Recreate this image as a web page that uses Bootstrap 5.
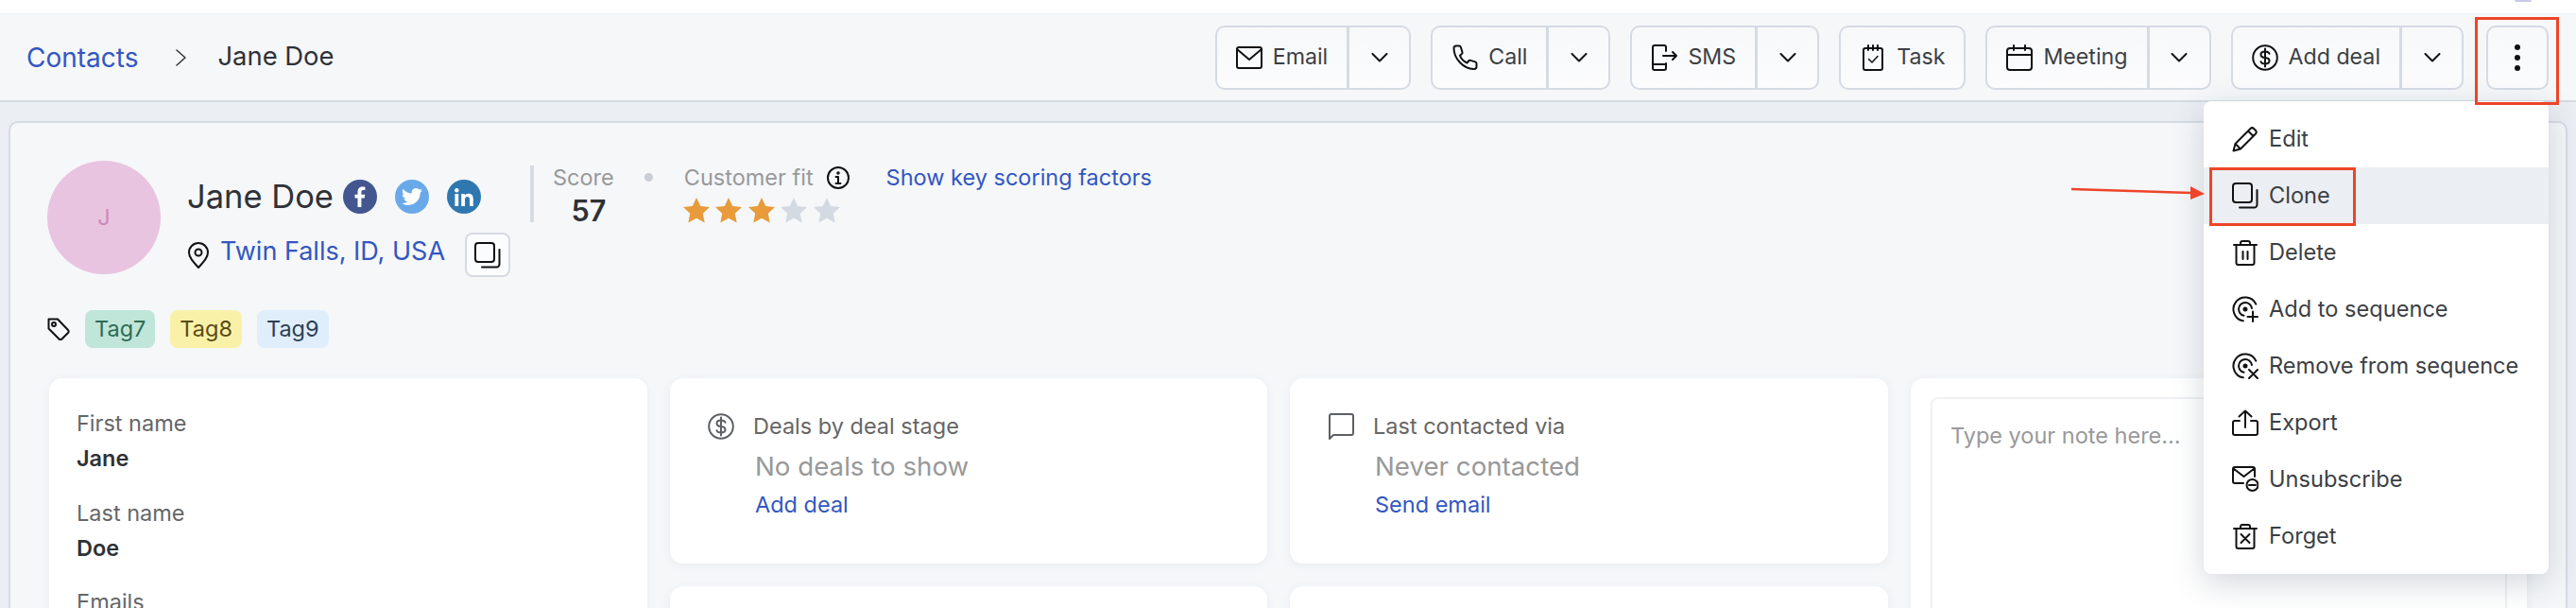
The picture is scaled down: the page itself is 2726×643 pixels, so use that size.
<!DOCTYPE html>
<html lang="en">
<head>
  <meta charset="UTF-8">
  <meta name="viewport" content="width=device-width, initial-scale=1.0">
  <title>Jane Doe - Contacts</title>
  <link href="https://cdn.jsdelivr.net/npm/bootstrap@5.3.0/dist/css/bootstrap.min.css" rel="stylesheet">
  <style>
    body {
      font-family: Inter, "Liberation Sans", sans-serif;
      font-size: 23.5px;
      color: #3c3f44;
      background: #fff;
    }
    a { color: #3356c1; text-decoration: none; }
    .ico { fill: none; stroke: #111; stroke-width: 2; stroke-linecap: round; stroke-linejoin: round; flex-shrink: 0; }

    /* white strip above the bar, only the bottom of the account avatar shows */
    .top-strip { height: 14px; }
    .user-sliver { width: 18px; height: 2px; margin-right: 47px; border-radius: 0 0 9px 9px; background: #c9c9ea; }

    /* top bar */
    .top-bar {
      height: 94px;
      padding: 0 29px 0 28px;
      background: #f5f7f9;
      border-top: 1px solid #edf0f4;
      border-bottom: 2px solid #d5dbe3;
    }
    .crumb-link { font-size: 28px; }
    .crumb-sep { margin: 0 33px 0 40px; stroke-width: 1.5; stroke: #333; }
    .crumb-now { font-size: 27.4px; color: #2f3136; margin-top: -2px; }
    .tool-set { gap: 21px; }
    .tool-btn {
      height: 68px;
      display: flex;
      align-items: center;
      gap: 11px;
      padding: 0 20px;
      font-size: 23.2px;
      color: #3c3f44;
      background: linear-gradient(#f6f8fa, #fcfcfd);
      border: 2px solid #d5dbe3;
      border-radius: 10px;
    }
    .tool-btn:hover { color: #3c3f44; border-color: #d5dbe3; }
    .btn-group > .tool-btn.caret-btn { width: 67px; padding: 0; justify-content: center; flex: none; }
    .more-btn { width: 66px; padding: 0; justify-content: center; }
    .more-slot { position: relative; margin-left: 3px; }
    .red-mark { position: absolute; border: 3px solid #ee4429; pointer-events: none; z-index: 1100; }
    .red-more { left: -12px; right: -11px; top: -9px; bottom: -16px; }

    /* actions menu */
    .more-slot .action-menu {
      position: absolute;
      top: 80px;
      right: 0;
      width: 365px;
      padding: 10px 0;
      border: 0;
      border-radius: 8px;
      font-size: 23.6px;
      box-shadow: 0 10px 34px rgba(60, 72, 95, .22);
    }
    .action-menu .dropdown-item {
      position: relative;
      height: 60px;
      display: flex;
      align-items: center;
      gap: 11px;
      padding: 0 30px;
      color: #3c3f44;
    }
    .action-menu .dropdown-item.is-hover { background: #ebeef3; }
    .red-clone { left: 6px; top: 0; width: 155px; height: 62px; }
    .clone-arrow { position: absolute; left: -140px; top: 18px; overflow: visible; }

    /* contact panel */
    .page-bg { padding: 20px 9px 0; background: #ebeef3; }
    .contact-panel {
      padding: 40px 41px 40px;
      background: #f5f7f9;
      border: 2px solid #d5dbe3;
      border-radius: 10px;
    }
    .avatar-disc {
      width: 120px;
      height: 120px;
      margin: 0 28px 0 -2px;
      border-radius: 50%;
      background: #e9c4e0;
      color: #c98bb9;
    }
    .name-col { width: 343px; padding-top: 19px; }
    .name-line { height: 38px; }
    .full-name { font-size: 34.5px; line-height: 38px; color: #2f3136; margin-right: 10px; }
    .social-set { gap: 19px; }
    .social-disc { width: 36px; height: 36px; border-radius: 50%; }
    .soc-fb { background: #43568f; }
    .soc-tw { background: #6aa9e9; }
    .soc-in { background: #2f77b0; }
    .place-line { margin-top: 19px; gap: 11px; }
    .place-link { font-size: 27px; padding-bottom: 6px; }
    .copy-btn {
      width: 48px;
      height: 47px;
      margin-left: 10px;
      padding: 0;
      background: #fbfcfd;
      border: 2px solid #d5dbe3;
      border-radius: 8px;
    }
    .score-col { margin: 5px 0 0 20px; height: 60px; padding-left: 20px; border-left: 4px solid #d5dbe3; }
    .score-head { margin-top: -5px; line-height: 36px; color: #999; }
    .score-val { font-size: 30.7px; line-height: 34px; font-weight: 600; color: #2f3136; text-align: center; padding-left: 11px; }
    .score-dot { width: 9px; height: 9px; margin: 13px 33px 0 32px; border-radius: 50%; background: #c9ced4; }
    .fit-head { line-height: 36px; color: #999; gap: 14px; }
    .star-set { gap: 6.5px; margin-top: 3px; margin-left: -1px; }
    .star-on { fill: #e99a3a; }
    .star-off { fill: #d3dae2; }
    .scoring-link { margin-left: 39px; line-height: 36px; }

    .tag-line { margin: 35px 0 0 -2px; gap: 16px; }
    .tag-pill { height: 40px; padding: 0 10px; border-radius: 8px; line-height: 40px; }
    .tag-green { background: #bfe6d9; color: #2e6b56; }
    .tag-yellow { background: #faf1a9; color: #5a4a14; }
    .tag-blue { background: #e0eefc; color: #2c4055; }

    .info-grid {
      display: grid;
      grid-template-columns: 633px 632px 633px 1fr;
      grid-template-rows: 196px 300px;
      gap: 24px;
      margin-top: 32px;
    }
    .info-tile {
      background: #fff;
      border-radius: 14px;
      box-shadow: 0 2px 10px rgba(90, 105, 130, .08);
    }
    .fields-tile { grid-column: 1; grid-row: 1 / span 2; padding: 30px 29px; }
    .field-name { line-height: 36px; color: #666; }
    .field-val { line-height: 37px; margin-bottom: 21.5px; font-weight: 600; color: #2f3136; }
    .stat-tile { padding: 33px 40px; }
    .stat-head { line-height: 36px; gap: 20px; color: #666; }
    .stat-head .ico { stroke: #5c5f63; }
    .stat-body { padding-left: 50px; }
    .stat-none { margin-top: 4px; font-size: 27.7px; line-height: 40px; color: #999; }
    .stat-link { display: block; margin-top: 3px; line-height: 36px; }
    .note-tile { grid-column: 4; grid-row: 1 / span 2; padding: 20px 21px; }
    .note-box {
      height: 500px;
      padding: 21px 19px;
      font-size: 23.5px;
      border: 2px solid #eef0f3;
      border-radius: 8px;
      resize: none;
    }
    .note-box::placeholder { color: #999; }
  </style>
</head>
<body class="vh-100 overflow-hidden">
  <svg class="d-none" xmlns="http://www.w3.org/2000/svg">
    <symbol id="i-mail" viewBox="0 0 28 28"><rect x="1" y="3" width="26" height="22" rx="2"/><path d="M1 5l13 11L27 5"/></symbol>
    <symbol id="i-phone" viewBox="0 0 28 28"><path d="M5 1.500h3c1 0 1.600.6 1.900 1.500l1.600 5.200c.2.8 0 1.400-.6 1.900l-2 1.600c1.500 3.800 4 6.300 7.500 7.800l1.700-2c.5-.6 1.200-.8 2-.6l5 1.500c.9.3 1.400.9 1.400 1.800v3.400c0 1.500-1 2.400-2.400 2.400C13 26.500 2.500 15 2.500 4 2.500 2.500 3.500 1.500 5 1.500z"/></symbol>
    <symbol id="i-sms" viewBox="0 0 28 28"><path d="M16 7V3a2 2 0 0 0-2-2H4a2 2 0 0 0-2 2v22a2 2 0 0 0 2 2h10a2 2 0 0 0 2-2v-5M2 21h14M13 12h14M23 8l4 4-4 4"/></symbol>
    <symbol id="i-task" viewBox="0 0 28 28"><rect x="4" y="4" width="20" height="23" rx="2"/><path d="M9 1v5M14 1v5M19 1v5"/><path d="M9.500 15.500l3.500 3.500 6-6.500" stroke-width="1.500"/></symbol>
    <symbol id="i-cal" viewBox="0 0 28 28"><rect x="1" y="4" width="26" height="23" rx="3"/><path d="M1 11h26M8 1v5M20 1v5"/></symbol>
    <symbol id="i-dollar" viewBox="0 0 28 28"><circle cx="14" cy="14" r="12.800"/><path d="M18.500 9.800c-.5-1.500-1.800-2.300-4.500-2.300-2.800 0-4.500 1.200-4.500 3.200s1.700 3.100 4.500 3.300 4.500 1.300 4.500 3.300-1.700 3.200-4.500 3.200c-2.700 0-4-.8-4.500-2.300M14 4.500v19"/></symbol>
    <symbol id="i-copy" viewBox="0 0 28 28"><rect x="1" y="1" width="20" height="20" rx="3"/><path d="M26.500 8v15.500a3 3 0 0 1-3 3H8"/></symbol>
    <symbol id="i-pencil" viewBox="0 0 28 28"><path d="M1.500 26.500l2-7.500L19.500 3c1-1 2.500-1 3.500 0l2 2c1 1 1 2.500 0 3.500L9 24.500zM17 5.500l5.500 5.500M3.500 19L9 24.500"/></symbol>
    <symbol id="i-trash" viewBox="0 0 28 28"><path d="M2 6h24M9 6V4a2 2 0 0 1 2-2h6a2 2 0 0 1 2 2v2M4.500 6v19a2 2 0 0 0 2 2h15a2 2 0 0 0 2-2V6M11.500 13v8M16.500 13v8"/></symbol>
    <symbol id="i-seq-add" viewBox="0 0 28 28"><path d="M25.300 8.700A12.500 12.500 0 1 0 11.800 26.300M21 13A7 7 0 1 0 12.500 20.800M22 16.500v10.500M16.500 22H27"/><circle cx="14" cy="14" r="1.500" fill="#111"/></symbol>
    <symbol id="i-seq-del" viewBox="0 0 28 28"><path d="M25.300 8.700A12.500 12.500 0 1 0 11.800 26.300M21 13A7 7 0 1 0 12.500 20.800M18 18l9 9M27 18l-9 9"/><circle cx="14" cy="14" r="1.500" fill="#111"/></symbol>
    <symbol id="i-export" viewBox="0 0 28 28"><path d="M8 12H3a2 2 0 0 0-2 2v11a2 2 0 0 0 2 2h22a2 2 0 0 0 2-2V14a2 2 0 0 0-2-2h-5M14 19V1.500M7.500 7.500L14 1.500l6.500 6"/></symbol>
    <symbol id="i-unsub" viewBox="0 0 28 28"><path d="M12 18H3a2 2 0 0 1-2-2V3a2 2 0 0 1 2-2h19a2 2 0 0 1 2 2v8M1.500 2.500L12.500 11 23.500 2.500M18 20h7"/><circle cx="21.500" cy="20" r="6"/></symbol>
    <symbol id="i-forget" viewBox="0 0 28 28"><path d="M2 6h24M9 6V4a2 2 0 0 1 2-2h6a2 2 0 0 1 2 2v2M4.500 6v19a2 2 0 0 0 2 2h15a2 2 0 0 0 2-2V6M9.500 12l9 9M18.500 12l-9 9"/></symbol>
    <symbol id="i-pin" viewBox="0 0 24 28"><path d="M12 27C6 20.500 2 16 2 11a10 10 0 0 1 20 0c0 5-4 9.500-10 16z"/><circle cx="12" cy="11" r="3.500"/></symbol>
    <symbol id="i-tag" viewBox="0 0 24 24"><path d="M1.500 1.500h9.500l11 11.500a2 2 0 0 1 0 3l-6.500 6.500a2 2 0 0 1-3 0L1.500 11.500z"/><circle cx="7" cy="7" r="2"/></symbol>
    <symbol id="i-info" viewBox="0 0 24 24"><circle cx="12" cy="12" r="11"/><path d="M9.500 11H12v7M9.500 18h5"/><circle cx="12" cy="7" r=".8"/></symbol>
    <symbol id="i-chat" viewBox="0 0 28 28"><path d="M2 27V3a2 2 0 0 1 2-2h21a2 2 0 0 1 2 2v18a2 2 0 0 1-2 2H6z"/></symbol>
    <symbol id="i-caret" viewBox="0 0 18 10"><path d="M1.500 1l7.500 7.500L16.500 1"/></symbol>
    <symbol id="i-star" viewBox="0 0 28 27"><path d="M14 0l4.200 8.900 9.800 1.200-7.200 6.700 1.900 9.700L14 21.700l-8.700 4.800 1.900-9.700L0 10.100l9.800-1.200z"/></symbol>
  </svg>

  <div class="top-strip d-flex justify-content-end"><div class="user-sliver"></div></div>

  <header class="top-bar d-flex align-items-center">
    <a class="crumb-link" href="#">Contacts</a>
    <svg class="ico crumb-sep" width="11" height="18" viewBox="0 0 11 18"><path d="M1 1l9 8-9 8"/></svg>
    <span class="crumb-now">Jane Doe</span>

    <div class="tool-set d-flex ms-auto">
      <div class="btn-group">
        <button type="button" class="btn tool-btn"><svg class="ico" width="28" height="28"><use href="#i-mail"/></svg>Email</button>
        <button type="button" class="btn tool-btn caret-btn"><svg class="ico" width="18" height="10"><use href="#i-caret"/></svg></button>
      </div>
      <div class="btn-group">
        <button type="button" class="btn tool-btn"><svg class="ico" width="28" height="28"><use href="#i-phone"/></svg>Call</button>
        <button type="button" class="btn tool-btn caret-btn"><svg class="ico" width="18" height="10"><use href="#i-caret"/></svg></button>
      </div>
      <div class="btn-group">
        <button type="button" class="btn tool-btn"><svg class="ico" width="28" height="28"><use href="#i-sms"/></svg>SMS</button>
        <button type="button" class="btn tool-btn caret-btn"><svg class="ico" width="18" height="10"><use href="#i-caret"/></svg></button>
      </div>
      <button type="button" class="btn tool-btn"><svg class="ico" width="28" height="28"><use href="#i-task"/></svg>Task</button>
      <div class="btn-group">
        <button type="button" class="btn tool-btn"><svg class="ico" width="28" height="28"><use href="#i-cal"/></svg>Meeting</button>
        <button type="button" class="btn tool-btn caret-btn"><svg class="ico" width="18" height="10"><use href="#i-caret"/></svg></button>
      </div>
      <div class="btn-group">
        <button type="button" class="btn tool-btn"><svg class="ico" width="28" height="28"><use href="#i-dollar"/></svg>Add deal</button>
        <button type="button" class="btn tool-btn caret-btn"><svg class="ico" width="18" height="10"><use href="#i-caret"/></svg></button>
      </div>
      <div class="more-slot">
        <button type="button" class="btn tool-btn more-btn" aria-label="More">
          <svg width="8" height="30" viewBox="0 0 8 30" fill="#111"><circle cx="4" cy="4" r="3"/><circle cx="4" cy="15" r="3"/><circle cx="4" cy="26" r="3"/></svg>
        </button>
        <span class="red-mark red-more"></span>
        <ul class="dropdown-menu show action-menu">
          <li><a class="dropdown-item" href="#"><svg class="ico" width="28" height="28"><use href="#i-pencil"/></svg>Edit</a></li>
          <li><a class="dropdown-item is-hover" href="#"><svg class="ico" width="28" height="28"><use href="#i-copy"/></svg>Clone
            <span class="red-mark red-clone"></span>
            <svg class="clone-arrow" width="140" height="20" viewBox="0 0 140 20"><path d="M0 5l128 4" stroke="#ee4429" stroke-width="2.500" fill="none"/><path d="M126 2l15 8-15 6z" fill="#ee4429"/></svg>
          </a></li>
          <li><a class="dropdown-item" href="#"><svg class="ico" width="28" height="28"><use href="#i-trash"/></svg>Delete</a></li>
          <li><a class="dropdown-item" href="#"><svg class="ico" width="28" height="28"><use href="#i-seq-add"/></svg>Add to sequence</a></li>
          <li><a class="dropdown-item" href="#"><svg class="ico" width="28" height="28"><use href="#i-seq-del"/></svg>Remove from sequence</a></li>
          <li><a class="dropdown-item" href="#"><svg class="ico" width="28" height="28"><use href="#i-export"/></svg>Export</a></li>
          <li><a class="dropdown-item" href="#"><svg class="ico" width="28" height="28"><use href="#i-unsub"/></svg>Unsubscribe</a></li>
          <li><a class="dropdown-item" href="#"><svg class="ico" width="28" height="28"><use href="#i-forget"/></svg>Forget</a></li>
        </ul>
      </div>
    </div>
  </header>

  <main class="page-bg">
    <section class="contact-panel">
      <div class="d-flex align-items-start">
        <div class="avatar-disc d-flex align-items-center justify-content-center flex-shrink-0">J</div>
        <div class="name-col">
          <div class="name-line d-flex align-items-center">
            <span class="full-name">Jane Doe</span>
            <div class="social-set d-flex">
              <a class="social-disc soc-fb d-flex align-items-center justify-content-center" href="#" aria-label="Facebook">
                <svg width="12" height="22" viewBox="0 0 12 22" fill="#fff"><path d="M3.500 22V12.500H.5V8.700h3V6c0-3.500 2-5.500 5-5.500 1.300 0 2.400.1 2.900.2v3.400h-2c-1.500 0-2 .8-2 2.100v2.500h3.800l-.5 3.800H7.400V22z"/></svg>
              </a>
              <a class="social-disc soc-tw d-flex align-items-center justify-content-center" href="#" aria-label="Twitter">
                <svg width="22" height="22" viewBox="0 0 24 24" fill="#fff"><path d="M23.953 4.570a10 10 0 01-2.825.775 4.958 4.958 0 002.163-2.723c-.951.555-2.005.959-3.127 1.184a4.920 4.920 0 00-8.384 4.482C7.690 8.095 4.067 6.130 1.640 3.162a4.822 4.822 0 00-.666 2.475c0 1.710.870 3.213 2.188 4.096a4.904 4.904 0 01-2.228-.616v.060a4.923 4.923 0 003.946 4.827 4.996 4.996 0 01-2.212.085 4.936 4.936 0 004.604 3.417 9.867 9.867 0 01-6.102 2.105c-.390 0-.779-.023-1.170-.067a13.995 13.995 0 007.557 2.209c9.053 0 13.998-7.496 13.998-13.985 0-.210 0-.420-.015-.630A9.935 9.935 0 0024 4.590z"/></svg>
              </a>
              <a class="social-disc soc-in d-flex align-items-center justify-content-center" href="#" aria-label="LinkedIn">
                <svg width="20" height="19" viewBox="0 0 20 19" fill="#fff"><circle cx="2.300" cy="2.300" r="2.200"/><rect x=".4" y="6" width="3.800" height="13"/><path d="M7.200 6h3.600v1.800c.7-1.200 2.100-2.100 4-2.100 3.700 0 5 2.300 5 6V19h-3.800v-6.500c0-2-.5-3.500-2.400-3.500s-2.600 1.500-2.600 3.400V19H7.200z"/></svg>
              </a>
            </div>
          </div>
          <div class="place-line d-flex align-items-center">
            <svg class="ico" width="24" height="28"><use href="#i-pin"/></svg>
            <a class="place-link text-nowrap" href="#">Twin Falls, ID, USA</a>
            <button type="button" class="btn copy-btn d-flex align-items-center justify-content-center flex-shrink-0" aria-label="Copy">
              <svg class="ico" width="28" height="28"><use href="#i-copy"/></svg>
            </button>
          </div>
        </div>
        <div class="score-col">
          <div class="score-head">Score</div>
          <div class="score-val">57</div>
        </div>
        <span class="score-dot"></span>
        <div>
          <div class="fit-head d-flex align-items-center">Customer fit <svg class="ico" width="24" height="24"><use href="#i-info"/></svg></div>
          <div class="star-set d-flex">
            <svg class="star-on" width="28" height="27"><use href="#i-star"/></svg>
            <svg class="star-on" width="28" height="27"><use href="#i-star"/></svg>
            <svg class="star-on" width="28" height="27"><use href="#i-star"/></svg>
            <svg class="star-off" width="28" height="27"><use href="#i-star"/></svg>
            <svg class="star-off" width="28" height="27"><use href="#i-star"/></svg>
          </div>
        </div>
        <a class="scoring-link" href="#">Show key scoring factors</a>
      </div>

      <div class="tag-line d-flex align-items-center">
        <svg class="ico" width="24" height="24"><use href="#i-tag"/></svg>
        <span class="tag-pill tag-green">Tag7</span>
        <span class="tag-pill tag-yellow">Tag8</span>
        <span class="tag-pill tag-blue">Tag9</span>
      </div>

      <div class="info-grid">
        <div class="info-tile fields-tile">
          <div class="field-name">First name</div>
          <div class="field-val">Jane</div>
          <div class="field-name">Last name</div>
          <div class="field-val">Doe</div>
          <div class="field-name">Emails</div>
        </div>
        <div class="info-tile stat-tile">
          <div class="stat-head d-flex align-items-center"><svg class="ico" width="28" height="28"><use href="#i-dollar"/></svg>Deals by deal stage</div>
          <div class="stat-body">
            <div class="stat-none">No deals to show</div>
            <a class="stat-link" href="#">Add deal</a>
          </div>
        </div>
        <div class="info-tile stat-tile">
          <div class="stat-head d-flex align-items-center"><svg class="ico" width="28" height="28"><use href="#i-chat"/></svg>Last contacted via</div>
          <div class="stat-body">
            <div class="stat-none">Never contacted</div>
            <a class="stat-link" href="#">Send email</a>
          </div>
        </div>
        <div class="info-tile note-tile">
          <textarea class="form-control note-box" placeholder="Type your note here..."></textarea>
        </div>
        <div class="info-tile"></div>
        <div class="info-tile"></div>
      </div>
    </section>
  </main>

  <script src="https://cdn.jsdelivr.net/npm/bootstrap@5.3.0/dist/js/bootstrap.bundle.min.js"></script>
</body>
</html>
